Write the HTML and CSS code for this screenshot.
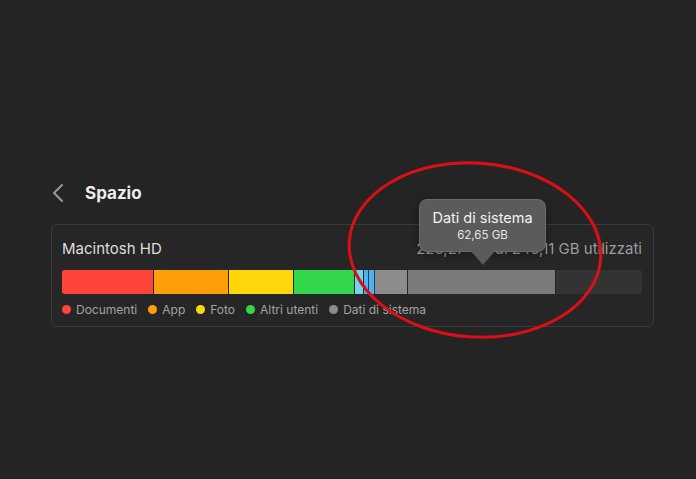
FILE: index.html
```html
<!DOCTYPE html>
<html lang="it">
<head>
  <meta charset="UTF-8">
  <title>Spazio</title>
  <link rel="stylesheet" href="styles.css">
</head>
<body>

  <!-- Header -->
  <div class="header">
    <svg class="back" width="12" height="20" viewBox="0 0 12 20">
      <path d="M10 2 L2 10 L10 18" fill="none" stroke="#9a9a9a" stroke-width="2" stroke-linecap="round" stroke-linejoin="round"/>
    </svg>
    <h1>Spazio</h1>
  </div>

  <!-- Storage card -->
  <div class="card">
    <div class="card-top">
      <span class="disk-name">Macintosh HD</span>
      <span class="disk-used">228,27 GB di 245,11 GB utilizzati</span>
    </div>

    <div class="bar">
      <div class="seg red" style="width:92px"></div>
      <div class="seg orange" style="width:75px"></div>
      <div class="seg yellow" style="width:65px"></div>
      <div class="seg green" style="width:61px"></div>
      <div class="seg cyan" style="width:9px"></div>
      <div class="seg blue" style="width:5px"></div>
      <div class="seg blue" style="width:6px"></div>
      <div class="seg gray" style="width:33px"></div>
      <div class="seg darkgray" style="width:148px"></div>
    </div>

    <div class="legend">
      <span class="item"><i class="dot red"></i>Documenti</span>
      <span class="item"><i class="dot orange"></i>App</span>
      <span class="item"><i class="dot yellow"></i>Foto</span>
      <span class="item"><i class="dot green"></i>Altri utenti</span>
      <span class="item"><i class="dot gray"></i>Dati di sistema</span>
    </div>

    <!-- Tooltip -->
    <div class="tooltip">
      <div class="tip-title">Dati di sistema</div>
      <div class="tip-value">62,65 GB</div>
    </div>
  </div>

  <!-- Red annotation circle -->
  <svg class="annotation" width="270" height="190" viewBox="0 0 270 190">
    <ellipse cx="135" cy="96" rx="126" ry="87" fill="none" stroke="#dc0f17" stroke-width="3" transform="rotate(4 135 96)"/>
  </svg>

</body>
</html>
```

FILE: styles.css
```css
body {
  margin: 0;
  background: #242424;
  font-family: Inter, "Noto Sans", sans-serif;
  padding: 183px 42px 0 51px;
  height: 479px;
  box-sizing: border-box;
  overflow: hidden;
  position: relative;
}

.header {
  display: flex;
  align-items: center;
  height: 20px;
}
.back {
  margin-left: 1px;
}
h1 {
  margin: 0 0 0 21px;
  font-size: 17px;
  font-weight: 700;
  color: #ececec;
}

.card {
  position: relative;
  margin-top: 21px;
  border: 1px solid #3a3a3a;
  border-radius: 6px;
  background: #262626;
  padding: 14px 11px 10px 10px;
  height: 103px;
  box-sizing: border-box;
}
.card-top {
  display: flex;
  justify-content: space-between;
  align-items: baseline;
  font-size: 15px;
  color: #dedede;
  height: 20px;
}
.disk-used {
  color: #9c9c9c;
}

.bar {
  display: flex;
  margin-top: 11px;
  height: 24px;
  background: #333333;
  border-radius: 3px;
  overflow: hidden;
}
.seg {
  box-sizing: border-box;
  border-right: 1px solid #262626;
}
.red { background: #fe453a; }
.orange { background: #fe9f0a; }
.yellow { background: #ffd60a; }
.green { background: #32d74b; }
.cyan { background: #6ad8ee; }
.blue { background: #4fb4e8; border-right-color: #1b3c6a; }
.gray { background: #8c8c8c; }
.darkgray { background: #7b7b7b; }

.legend {
  display: flex;
  gap: 11px;
  margin-top: 8px;
  font-size: 12px;
  color: #a2a2a2;
}
.item {
  display: flex;
  align-items: center;
}
.dot {
  width: 9px;
  height: 9px;
  border-radius: 50%;
  margin-right: 5px;
}

.tooltip {
  position: absolute;
  left: 367px;
  top: -26px;
  width: 127px;
  height: 53px;
  box-sizing: border-box;
  background: #5b5b5b;
  border: 1px solid #6a6a6a;
  border-radius: 8px;
  text-align: center;
  padding-top: 9px;
  color: #f2f2f2;
  box-shadow: 0 2px 8px rgba(0, 0, 0, 0.35);
}
.tooltip::after {
  content: "";
  position: absolute;
  left: 51px;
  bottom: -14px;
  border-left: 12px solid transparent;
  border-right: 12px solid transparent;
  border-top: 14px solid #5b5b5b;
}
.tip-title {
  font-size: 14.5px;
  line-height: 18px;
}
.tip-value {
  font-size: 11.5px;
  line-height: 16px;
  color: #e4e4e4;
}

.annotation {
  position: absolute;
  left: 340px;
  top: 154px;
}
```
